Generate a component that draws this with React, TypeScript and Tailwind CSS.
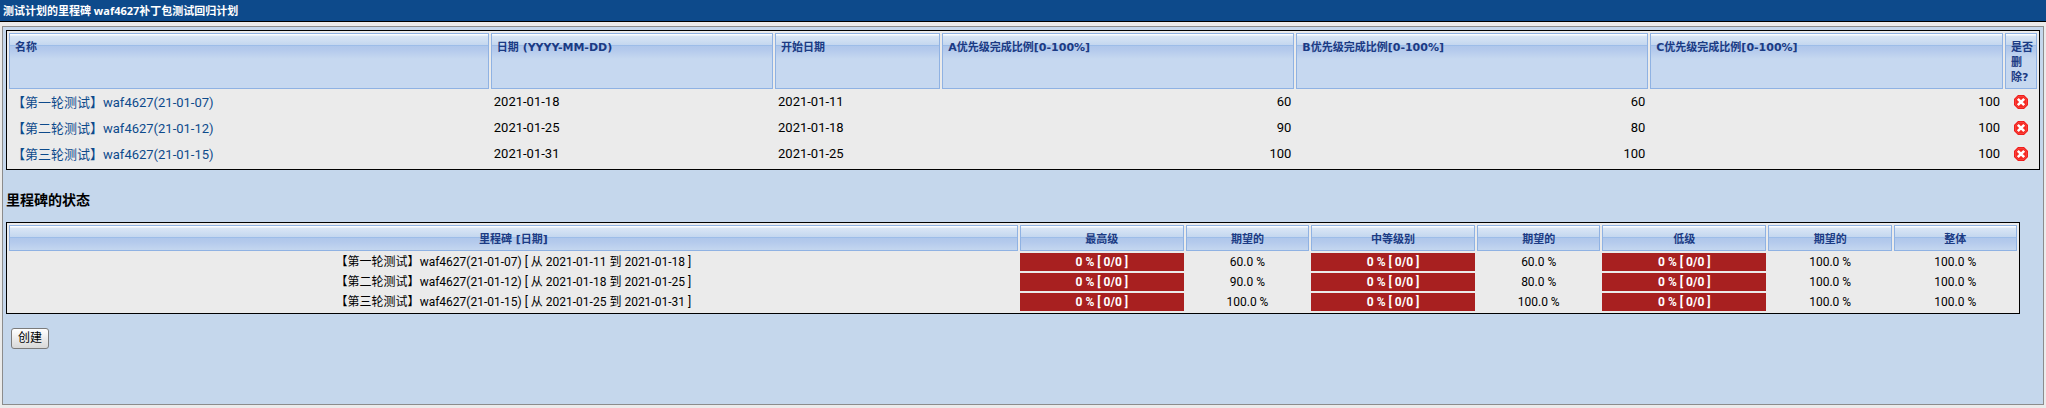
import type { ReactNode } from "react";

type Milestone = {
  round: string;
  code: string;
  target: string;
  start: string;
  a: number;
  b: number;
  c: number;
};

const milestones: Milestone[] = [
  { round: "【第一轮测试】", code: "waf4627(21-01-07)", target: "2021-01-18", start: "2021-01-11", a: 60, b: 60, c: 100 },
  { round: "【第二轮测试】", code: "waf4627(21-01-12)", target: "2021-01-25", start: "2021-01-18", a: 90, b: 80, c: 100 },
  { round: "【第三轮测试】", code: "waf4627(21-01-15)", target: "2021-01-31", start: "2021-01-25", a: 100, b: 100, c: 100 },
];

const th =
  "border border-[#8fb2e3] bg-[#c6d8f0] bg-[linear-gradient(to_bottom,#fbfdff_0,#fbfdff_1px,#d9e6f5_2px,#c4d7ef_11px,#9dbde8_11px,#9dbde8_12px,#afc7eb_12px,#b4caec_16px,#c6d8f0_25px,#c6d8f0_100%)] px-[5px] pt-[6px] pb-[3px] align-top font-['DejaVu_Sans','Noto_Sans_CJK_SC',sans-serif] text-[11px] leading-[15px] font-bold text-[#1b3b84]";

function Head({ children, center }: { children: ReactNode; center?: boolean }) {
  return (
    <th scope="col" className={center ? `${th} text-center` : `${th} text-left`}>
      {children}
    </th>
  );
}

function DeleteIcon() {
  return (
    <svg width="14" height="14" viewBox="0 0 14 14" aria-hidden="true">
      <path d="M4 0H10L14 4V10L10 14H4L0 10V4Z" fill="#f01010" />
      <path d="M4.5 1.2H9.5L12.8 4.5V9.5L9.5 12.8H4.5L1.2 9.5V4.5Z" fill="#f62a22" stroke="#fa6a62" strokeWidth="0.6" />
      <path d="M3.8 3.8L10.2 10.2M10.2 3.8L3.8 10.2" stroke="#fff" strokeWidth="2.6" />
    </svg>
  );
}

function MilestoneTable() {
  return (
    <table className="w-full table-fixed border-separate border-spacing-[2px] border border-black bg-[#ebebeb] text-[13px] leading-[22px]">
      <colgroup>
        <col className="w-[23.8%]" />
        <col className="w-[14%]" />
        <col className="w-[8.2%]" />
        <col className="w-[17.46%]" />
        <col className="w-[17.46%]" />
        <col className="w-[17.5%]" />
        <col />
      </colgroup>
      <thead>
        <tr>
          <Head>名称</Head>
          <Head>日期 (YYYY-MM-DD)</Head>
          <Head>开始日期</Head>
          <Head>A优先级完成比例[0-100%]</Head>
          <Head>B优先级完成比例[0-100%]</Head>
          <Head>C优先级完成比例[0-100%]</Head>
          <th scope="col" className={`${th} pr-0 text-left`}>
            是否
            <br />删<br />
            除?
          </th>
        </tr>
      </thead>
      <tbody>
        {milestones.map((m) => (
          <tr key={m.code} className="h-6">
            <td className="px-[3px] pt-[1px] pb-[1px]">
              <a href="#edit" className="text-[#0d4a8b]">
                {m.round}
                {m.code}
              </a>
            </td>
            <td className="px-[3px] pb-[2px]">{m.target}</td>
            <td className="px-[3px] pb-[2px]">{m.start}</td>
            <td className="px-[3px] pb-[2px] text-right">{m.a}</td>
            <td className="px-[3px] pb-[2px] text-right">{m.b}</td>
            <td className="px-[3px] pb-[2px] text-right">{m.c}</td>
            <td className="pb-[2px]">
              <button type="button" aria-label={`删除 ${m.code}`} className="mx-auto block">
                <DeleteIcon />
              </button>
            </td>
          </tr>
        ))}
      </tbody>
    </table>
  );
}

function Progress() {
  return <td className="bg-[#a82020] font-bold text-white">0 % [ 0/0 ]</td>;
}

function StatusTable() {
  return (
    <table className="w-[99%] table-fixed border-separate border-spacing-[2px] border border-black bg-[#ebebeb] text-center text-[12px] leading-[16px]">
      <colgroup>
        <col className="w-[50.6%]" />
        <col className="w-[8.23%]" />
        <col className="w-[6.18%]" />
        <col className="w-[8.23%]" />
        <col className="w-[6.18%]" />
        <col className="w-[8.23%]" />
        <col className="w-[6.2%]" />
        <col />
      </colgroup>
      <thead>
        <tr>
          <Head center>里程碑 [日期]</Head>
          <Head center>最高级</Head>
          <Head center>期望的</Head>
          <Head center>中等级别</Head>
          <Head center>期望的</Head>
          <Head center>低级</Head>
          <Head center>期望的</Head>
          <Head center>整体</Head>
        </tr>
      </thead>
      <tbody>
        {milestones.map((m) => (
          <tr key={m.code} className="h-[18px]">
            <td>
              {m.round}
              {m.code} [ 从 {m.start} 到 {m.target} ]
            </td>
            <Progress />
            <td>{m.a.toFixed(1)} %</td>
            <Progress />
            <td>{m.b.toFixed(1)} %</td>
            <Progress />
            <td>{m.c.toFixed(1)} %</td>
            <td>100.0 %</td>
          </tr>
        ))}
      </tbody>
    </table>
  );
}

export default function App() {
  return (
    <div className="flex min-h-screen flex-col bg-[#ebebeb] font-['Roboto','Noto_Sans_CJK_SC',sans-serif] text-black">
      <h1 className="border-b border-black bg-[#0d4a8b] px-[3px] font-['Open_Sans','Noto_Sans_CJK_SC',sans-serif] text-[11px] leading-[21px] font-bold text-white">
        测试计划的里程碑 waf4627补丁包测试回归计划
      </h1>
      <main className="mx-[2px] mt-1 mb-[3px] flex-1 border border-[#8c8c8c] bg-[#c5d7ec] p-[3px]">
        <MilestoneTable />
        <h2 className="mt-5 mb-3 text-[14px] leading-[20px] font-bold">里程碑的状态</h2>
        <StatusTable />
        <form className="mt-[14px] ml-[5px]" onSubmit={(e) => e.preventDefault()}>
          <button
            type="submit"
            className="block rounded-[3px] border border-[#7b7b7b] bg-linear-to-b from-white to-[#d8d8d8] px-[6px] text-[12px] leading-[19px]"
          >
            创建
          </button>
        </form>
      </main>
    </div>
  );
}
